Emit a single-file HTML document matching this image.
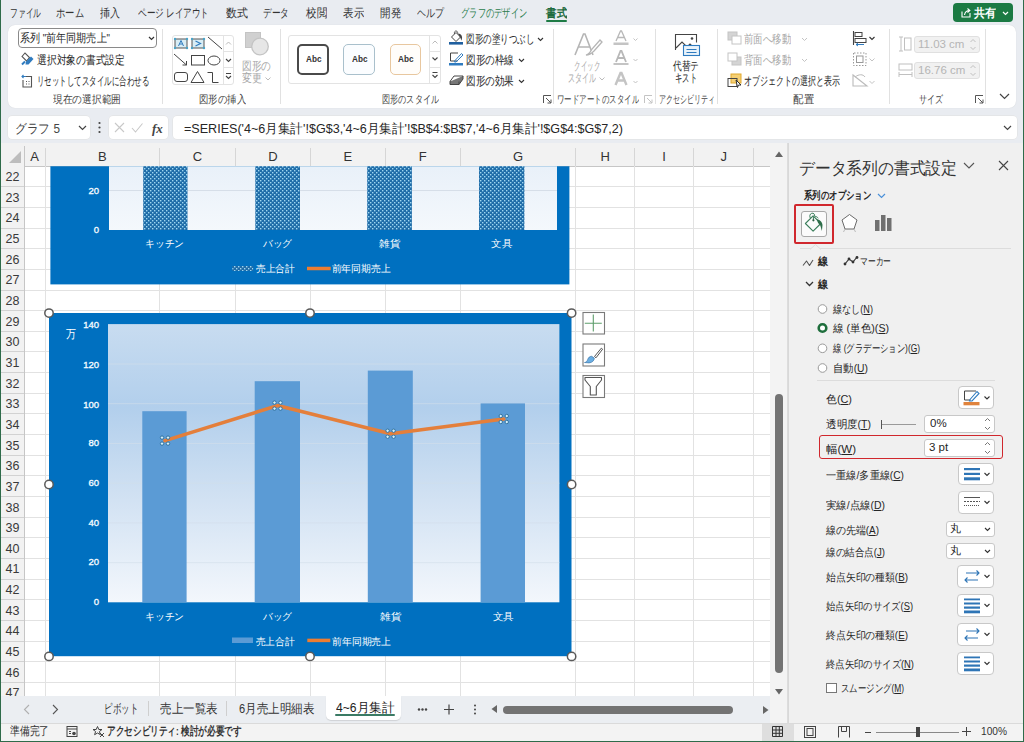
<!DOCTYPE html>
<html><head><meta charset="utf-8">
<style>
*{box-sizing:border-box}
html,body{margin:0;padding:0}
body{width:1024px;height:742px;overflow:hidden;position:relative;background:#e9ecf1;font-family:"Liberation Sans",sans-serif;color:#262626;font-size:12px}
.a{position:absolute}
.t{position:absolute;white-space:nowrap;line-height:1}
/* tabs */
.tab{position:absolute;top:6px;font-size:12px;color:#333;white-space:nowrap;line-height:14px}
.rib{left:8px;top:24.5px;width:1008px;height:83px;background:#fff;border-radius:7px;box-shadow:0 0 1px rgba(0,0,0,.15)}
.sep{position:absolute;top:32px;width:1px;height:70px;background:#e1e1e1}
.glab{position:absolute;top:93px;font-size:11px;color:#444;white-space:nowrap;line-height:12px}
.rt{position:absolute;font-size:11px;color:#262626;white-space:nowrap;line-height:12px}
.dis{color:#a8a8a8}
/* grid */
.colh{position:absolute;top:146px;height:20px;background:#f0f0f0;border-right:1px solid #d4d4d4;border-bottom:1px solid #bdbdbd;font-size:13px;color:#444;text-align:center;line-height:20px}
.rowh{position:absolute;left:1px;width:24px;background:#f0f0f0;border-bottom:1px solid #d4d4d4;border-right:1px solid #bdbdbd;font-size:13px;color:#444;text-align:center}
/* pane */
.pl{position:absolute;font-size:11px;color:#262626;white-space:nowrap;line-height:12px}
.btn{position:absolute;background:#fff;border:1px solid #c8c8c8;border-radius:4px}
</style></head><body>
<!-- window frame -->
<div class="a" style="left:0;top:0;width:1px;height:742px;background:#2f6b4a"></div>
<div class="a" style="right:0;top:0;width:1px;height:742px;background:#2f6b4a"></div>
<div class="a" style="left:0;bottom:0;width:1024px;height:1px;background:#2f6b4a"></div>

<!-- menu tabs -->
<div class="f tab" style="left:10px;width:31px">ファイル</div>
<div class="f tab" style="left:56px;width:28px">ホーム</div>
<div class="f tab" style="left:100px;width:20px">挿入</div>
<div class="f tab" style="left:138px;width:71px">ページ レイアウト</div>
<div class="f tab" style="left:226px;width:22px">数式</div>
<div class="f tab" style="left:263px;width:26px">データ</div>
<div class="f tab" style="left:306px;width:21px">校閲</div>
<div class="f tab" style="left:343px;width:21px">表示</div>
<div class="f tab" style="left:380px;width:21px">開発</div>
<div class="f tab" style="left:417px;width:27px">ヘルプ</div>
<div class="f tab" style="left:461px;width:66px;color:#2a7d4c">グラフのデザイン</div>
<div class="f tab" style="left:546px;width:21px;color:#1e6b3f;font-weight:bold">書式</div>
<div class="a" style="left:546px;top:20px;width:21px;height:2px;background:#1e7b45;border-radius:1px"></div>
<div class="a" style="left:953px;top:3px;width:60px;height:19px;background:#1b7a43;border-radius:4px"></div>
<svg class="a" style="left:960px;top:7px" width="12" height="11" viewBox="0 0 12 11"><path d="M2 4.5v5.5h8V6" fill="none" stroke="#fff" stroke-width="1.1"/><path d="M4.5 8c.5-3 2.5-4.5 5-4.5M7.5 1.5l2.3 2-2.3 2" fill="none" stroke="#fff" stroke-width="1.1"/></svg>
<div class="f t" style="left:974px;top:7px;width:22px;color:#fff;font-size:12px;font-weight:bold">共有</div>
<svg class="a" style="left:1002px;top:11px" width="7" height="5" viewBox="0 0 7 5"><path d="M1 1l2.5 2.5L6 1" fill="none" stroke="#fff" stroke-width="1.2"/></svg>

<!-- ribbon -->
<div class="a rib"></div>
<!-- group 1: current selection -->
<div class="a" style="left:18px;top:28px;width:139px;height:20px;border:1px solid #8a8a8a;border-radius:4px;background:#fff"></div>
<div class="f rt" style="left:20px;top:32px;width:90px;font-size:11.5px">系列 "前年同期売上"</div>
<svg class="a" style="left:148px;top:36px" width="7" height="5" viewBox="0 0 7 5"><path d="M1 1l2.5 2.5L6 1" fill="none" stroke="#333" stroke-width="1.2"/></svg>
<svg class="a" style="left:20px;top:52px" width="14" height="14" viewBox="0 0 14 14"><path d="M2 4.5l3-3.5 4.5 4.5-3 3.5z" fill="none" stroke="#555" stroke-width="1.1"/><path d="M6 9.5l5-5 2.5 2.5-5 5.5H5.5z" fill="#2f7bbf"/><path d="M2 12.5l3-3" stroke="#2f7bbf" stroke-width="2"/></svg>
<div class="f rt" style="left:37px;top:54px;width:88px;font-size:11.5px">選択対象の書式設定</div>
<svg class="a" style="left:21px;top:73px" width="12" height="15" viewBox="0 0 12 15"><path d="M3.5 3.5h7v10.5h-8.5v-7" fill="none" stroke="#555" stroke-width="1.1"/><path d="M1 3.5h4M2.5 2l-1.5 1.5 1.5 1.5" fill="none" stroke="#2f7bbf" stroke-width="1.1"/><path d="M5 8.5h1M7.5 8.5h1M5 11h1M7.5 11h1" stroke="#555" stroke-width="1"/></svg>
<div class="f rt" style="left:37px;top:75px;width:112px;font-size:11.5px">リセットしてスタイルに合わせる</div>
<div class="f glab" style="left:53px;width:68px">現在の選択範囲</div>
<div class="sep" style="left:162px;top:29px;height:75px"></div>

<!-- group 2: insert shapes -->
<div class="a" style="left:172px;top:35px;width:62px;height:50px;border:1px solid #e3e3e3;border-radius:3px"></div>
<div class="a" style="left:223px;top:35px;width:1px;height:50px;background:#e3e3e3"></div>
<div class="a" style="left:223px;top:51px;width:11px;height:1px;background:#e3e3e3"></div>
<div class="a" style="left:223px;top:67px;width:11px;height:1px;background:#e3e3e3"></div>
<svg class="a" style="left:172px;top:35px" width="62" height="50" viewBox="0 0 62 50">
 <rect x="3" y="4" width="12" height="9" fill="#d8edf5" stroke="#555" stroke-width="1"/>
 <path d="M6.5 11l2.5-5.5 2.5 5.5M7.5 9h3" fill="none" stroke="#2f7bbf" stroke-width="1"/>
 <circle cx="3" cy="4" r="1.2" fill="#4aa3c8"/><circle cx="15" cy="4" r="1.2" fill="#4aa3c8"/><circle cx="3" cy="13" r="1.2" fill="#4aa3c8"/><circle cx="15" cy="13" r="1.2" fill="#4aa3c8"/>
 <rect x="20" y="4" width="12" height="9" fill="#d8edf5" stroke="#555" stroke-width="1"/>
 <path d="M23.5 6l5 2.5-5 2.5" fill="none" stroke="#2f7bbf" stroke-width="1.2"/>
 <circle cx="20" cy="4" r="1.2" fill="#4aa3c8"/><circle cx="32" cy="4" r="1.2" fill="#4aa3c8"/><circle cx="20" cy="13" r="1.2" fill="#4aa3c8"/><circle cx="32" cy="13" r="1.2" fill="#4aa3c8"/>
 <path d="M36 2l14 12" stroke="#444" stroke-width="1"/>
 <path d="M2 19l12.5 11M14.5 30v-4M14.5 30h-4" fill="none" stroke="#444" stroke-width="1"/>
 <rect x="19.5" y="20.5" width="13" height="9.5" fill="none" stroke="#444" stroke-width="1"/>
 <ellipse cx="42" cy="25.5" rx="6" ry="4.5" fill="none" stroke="#444" stroke-width="1"/>
 <rect x="2.5" y="37.5" width="13" height="9" rx="2.5" fill="none" stroke="#444" stroke-width="1"/>
 <path d="M19 47.5l6.5-11 6.5 11z" fill="none" stroke="#444" stroke-width="1"/>
 <path d="M35.5 37.5h5v10h6" fill="none" stroke="#444" stroke-width="1"/>
 <path d="M54 9.5l2.5-2.5 2.5 2.5" fill="none" stroke="#bbb" stroke-width="1"/>
 <path d="M54 24l2.5 2.5 2.5-2.5" fill="none" stroke="#444" stroke-width="1.1"/>
 <path d="M54 38.5h5M54 41l2.5 2.5 2.5-2.5" fill="none" stroke="#444" stroke-width="1.1"/>
</svg>
<svg class="a" style="left:244px;top:31px" width="28" height="26" viewBox="0 0 28 26"><rect x="1.5" y="1.5" width="15" height="15" fill="#d0d0d0" stroke="#c4c4c4"/><circle cx="16" cy="15.5" r="8.3" fill="#e6e6e6" stroke="#c4c4c4" stroke-width="1.3"/></svg>
<div class="f rt dis" style="left:242px;top:60px;width:29px;font-size:11.5px">図形の</div>
<div class="f rt dis" style="left:242px;top:72px;width:20px;font-size:11.5px">変更</div>
<svg class="a" style="left:265px;top:77px" width="6" height="4" viewBox="0 0 6 4"><path d="M.5.5l2.5 2.5 2.5-2.5" fill="none" stroke="#bbb" stroke-width="1"/></svg>
<div class="f glab" style="left:199px;width:47px">図形の挿入</div>
<div class="sep" style="left:280px;top:29px;height:75px"></div>

<!-- group 3: shape styles -->
<div class="a" style="left:288px;top:35px;width:153px;height:49px;border:1px solid #e3e3e3;border-radius:3px"></div>
<div class="a" style="left:429px;top:35px;width:1px;height:49px;background:#e3e3e3"></div>
<div class="a" style="left:429px;top:51px;width:12px;height:1px;background:#e3e3e3"></div>
<div class="a" style="left:429px;top:67px;width:12px;height:1px;background:#e3e3e3"></div>
<svg class="a" style="left:429px;top:35px" width="12" height="49" viewBox="0 0 12 49"><path d="M3.5 8.5l2.5-2.5 2.5 2.5" fill="none" stroke="#bbb" stroke-width="1"/><path d="M3.5 22.5l2.5 2.5 2.5-2.5" fill="none" stroke="#444" stroke-width="1.1"/><path d="M3.5 37.5h5M3.5 40l2.5 2.5 2.5-2.5" fill="none" stroke="#444" stroke-width="1.1"/></svg>
<div class="a" style="left:297px;top:44px;width:32px;height:31px;border:2px solid #4a4a4a;border-radius:5px"></div>
<div class="a" style="left:343px;top:44px;width:32px;height:31px;border:1.6px solid #a9c0cc;border-radius:5px;background:#fbfdff"></div>
<div class="a" style="left:390px;top:44px;width:31px;height:31px;border:1.6px solid #e8c79f;border-radius:5px;background:#fffdfa"></div>
<div class="f t" style="left:305.5px;top:54px;width:15.5px;font-size:9.5px;color:#333;font-weight:bold">Abc</div>
<div class="f t" style="left:351.5px;top:54px;width:15.5px;font-size:9.5px;color:#333;font-weight:bold">Abc</div>
<div class="f t" style="left:398px;top:54px;width:15.5px;font-size:9.5px;color:#333;font-weight:bold">Abc</div>
<div class="f glab" style="left:382px;width:57px">図形のスタイル</div>

<svg class="a" style="left:449px;top:30px" width="15" height="15" viewBox="0 0 15 15"><path d="M2.5 7l4.5-4.5 4.5 4.5-4.5 4.5z" fill="#fff" stroke="#444" stroke-width="1" stroke-linejoin="round"/><path d="M5.5 4C5 2 6 .8 7.2 1s1.6 1.2 1.4 2.4" fill="none" stroke="#444" stroke-width=".9"/><path d="M8.8 3.5c2.3 0 4.2 1.6 4.3 4l-.6 3.3-1.3-3.3z" fill="#444"/><rect x="0" y="12" width="14" height="2.6" fill="#1f5f9f"/></svg>
<div class="f rt" style="left:466px;top:33px;width:68px;font-size:11.5px">図形の塗りつぶし</div>
<svg class="a" style="left:537px;top:37px" width="7" height="5" viewBox="0 0 7 5"><path d="M1 1l2.5 2.5L6 1" fill="none" stroke="#333" stroke-width="1.1"/></svg>
<svg class="a" style="left:449px;top:51px" width="15" height="15" viewBox="0 0 15 15"><path d="M9 2H1.5v8h7" fill="none" stroke="#444" stroke-width="1"/><path d="M6 9.5l6.5-7 1.5 1.5-7 7H5.5z" fill="none" stroke="#2f7bbf" stroke-width="1"/><rect x="0" y="12" width="14" height="2.5" fill="#2f7bbf"/></svg>
<div class="f rt" style="left:466px;top:54px;width:48px;font-size:11.5px">図形の枠線</div>
<svg class="a" style="left:518px;top:58px" width="7" height="5" viewBox="0 0 7 5"><path d="M1 1l2.5 2.5L6 1" fill="none" stroke="#333" stroke-width="1.1"/></svg>
<svg class="a" style="left:449px;top:74px" width="15" height="13" viewBox="0 0 15 13"><path d="M1 7.5l4-5.5h9l-4 5.5z" fill="#fff" stroke="#444" stroke-width="1"/><path d="M1 7.5v3h9l4-5.5V2M10 7.5v3" fill="#777" stroke="#444" stroke-width="1"/></svg>
<div class="f rt" style="left:466px;top:75px;width:48px;font-size:11.5px">図形の効果</div>
<svg class="a" style="left:518px;top:79px" width="7" height="5" viewBox="0 0 7 5"><path d="M1 1l2.5 2.5L6 1" fill="none" stroke="#333" stroke-width="1.1"/></svg>
<svg class="a" style="left:543px;top:95px" width="9" height="9" viewBox="0 0 9 9"><path d="M.5 8V.5H8M3 3l5 5M8 4.5V8H4.5" fill="none" stroke="#555" stroke-width="1"/></svg>
<div class="sep" style="left:553px;top:29px;height:75px"></div>

<!-- group 4: wordart -->
<svg class="a" style="left:573px;top:32px" width="30" height="25" viewBox="0 0 30 25"><path d="M2 23L10.5 2h1.5L20 23M5.5 15h11" fill="none" stroke="#b5b5b5" stroke-width="1.6"/><path d="M13 23c3-1 5-4 6-6l8-9 2 2-8 9c-2 2-4 4-8 4z" fill="#fff" stroke="#b5b5b5" stroke-width="1.3"/></svg>
<div class="f rt dis" style="left:574px;top:60px;width:26px;font-size:11.5px">クイック</div>
<div class="f rt dis" style="left:568px;top:72px;width:28px;font-size:11.5px">スタイル</div>
<svg class="a" style="left:599px;top:77px" width="6" height="4" viewBox="0 0 6 4"><path d="M.5.5l2.5 2.5 2.5-2.5" fill="none" stroke="#bbb" stroke-width="1"/></svg>
<svg class="a" style="left:612px;top:30px" width="30" height="58" viewBox="0 0 30 58">
<path d="M4 11L8.5 1h1L14 11M5.8 7.5h6.5" fill="none" stroke="#b8b8b8" stroke-width="1.3"/><rect x="1.5" y="12.5" width="15" height="2.5" fill="#c4c4c4"/>
<path d="M4 32L8.5 21h1L14 32M5.8 28h6.5" fill="none" stroke="#b8b8b8" stroke-width="1.8"/><rect x="1.5" y="33" width="15" height="2" fill="#c4c4c4"/>
<path d="M3.5 55L8.5 43h1l5 12M5.5 50.5h7" fill="none" stroke="#c4c4c4" stroke-width="2.4"/>
<path d="M21.5 8.5l2 2 2-2M21.5 29l2 2 2-2M21.5 51l2 2 2-2" fill="none" stroke="#c4c4c4" stroke-width="1"/>
</svg>
<div class="f glab" style="left:557px;width:82px">ワードアートのスタイル</div>
<svg class="a" style="left:644px;top:95px" width="9" height="9" viewBox="0 0 9 9"><path d="M.5 8V.5H8M3 3l5 5M8 4.5V8H4.5" fill="none" stroke="#c4c4c4" stroke-width="1"/></svg>
<div class="sep" style="left:655px;top:29px;height:75px"></div>

<!-- group 5: accessibility -->
<svg class="a" style="left:674px;top:33px" width="27" height="24" viewBox="0 0 27 24"><path d="M1.5 17V1.5h21v8" fill="none" stroke="#444" stroke-width="1.1"/><path d="M2 15l6-6 5 5 3-3 2 2" fill="none" stroke="#444" stroke-width="1.1"/><circle cx="18" cy="5.5" r="1.3" fill="#444"/><rect x="9.5" y="12.5" width="16" height="10" fill="#e9f3fb" stroke="#2f7bbf" stroke-width="1.1"/><path d="M12.5 16.5h10M12.5 19.5h10" stroke="#2f7bbf" stroke-width="1"/></svg>
<div class="f rt" style="left:673px;top:60px;width:26px;font-size:11.5px">代替テ</div>
<div class="f rt" style="left:675px;top:72px;width:22px;font-size:11.5px">キスト</div>
<div class="f glab" style="left:659px;width:56px">アクセシビリティ</div>
<div class="sep" style="left:717px;top:29px;height:75px"></div>

<!-- group 6: arrange -->
<svg class="a" style="left:727px;top:31px" width="15" height="14" viewBox="0 0 15 14"><rect x="1" y="1" width="9" height="8" fill="#d4d4d4" stroke="#c4c4c4"/><rect x="5" y="5" width="9" height="8" fill="#fff" stroke="#c4c4c4"/></svg>
<div class="f rt dis" style="left:744px;top:33px;width:47px;font-size:11.5px">前面へ移動</div>
<svg class="a" style="left:801px;top:37px" width="7" height="5" viewBox="0 0 7 5"><path d="M1 1l2.5 2.5L6 1" fill="none" stroke="#c4c4c4" stroke-width="1"/></svg>
<svg class="a" style="left:727px;top:52px" width="15" height="14" viewBox="0 0 15 14"><rect x="5" y="5" width="9" height="8" fill="#d4d4d4" stroke="#c4c4c4"/><rect x="1" y="1" width="9" height="8" fill="#fff" stroke="#c4c4c4"/></svg>
<div class="f rt dis" style="left:744px;top:54px;width:47px;font-size:11.5px">背面へ移動</div>
<svg class="a" style="left:801px;top:58px" width="7" height="5" viewBox="0 0 7 5"><path d="M1 1l2.5 2.5L6 1" fill="none" stroke="#c4c4c4" stroke-width="1"/></svg>
<svg class="a" style="left:727px;top:73px" width="16" height="15" viewBox="0 0 16 15"><rect x="4" y="1" width="10" height="9" fill="#f5cf73" stroke="#e0a82e"/><rect x="1" y="5.5" width="9" height="8" fill="none" stroke="#444"/><path d="M9 7l5 5h-2.5l-1 2.5z" fill="#fff" stroke="#333" stroke-width="1"/></svg>
<div class="f rt" style="left:744px;top:75px;width:96px;font-size:11.5px">オブジェクトの選択と表示</div>
<svg class="a" style="left:852px;top:30px" width="24" height="58" viewBox="0 0 24 58">
<path d="M1.5 1v14" stroke="#444" stroke-width="1.1"/><rect x="3" y="2.5" width="7" height="4" fill="none" stroke="#444"/><rect x="3" y="8.5" width="11" height="4" fill="none" stroke="#444"/><path d="M4 14.5h8M6 13l-2 1.5 2 1.5" fill="none" stroke="#2f7bbf" stroke-width="1"/>
<path d="M17.5 7l2.5 2.5 2.5-2.5" fill="none" stroke="#333" stroke-width="1.1"/>
<path d="M1.5 23v12.5h12.5V23z" fill="none" stroke="#999" stroke-width="1" stroke-dasharray="1.5 1.5"/><rect x="4.5" y="26" width="6.5" height="6.5" fill="none" stroke="#999"/>
<path d="M17.5 28.5l2.5 2.5 2.5-2.5" fill="none" stroke="#c4c4c4" stroke-width="1"/>
<path d="M1 56h14l-14-11z" fill="none" stroke="#bbb" stroke-width="1.1"/><path d="M3 47c4-3 8-3 10 0" fill="none" stroke="#bbb"/>
<path d="M17.5 51l2.5 2.5 2.5-2.5" fill="none" stroke="#c4c4c4" stroke-width="1"/>
</svg>
<div class="f glab" style="left:793px;width:21px">配置</div>
<div class="sep" style="left:889px;top:29px;height:75px"></div>

<!-- group 7: size -->
<svg class="a" style="left:898px;top:36px" width="14" height="16" viewBox="0 0 14 16"><path d="M1 1h4M1 15h4M3 1v14" stroke="#c0c0c0" stroke-width="1"/><rect x="6.5" y="2" width="6.5" height="12" fill="none" stroke="#c0c0c0"/></svg>
<div class="a" style="left:914px;top:36px;width:66px;height:17px;background:#f1f1f1;border:1px solid #e0e0e0;border-radius:3px"></div>
<div class="t" style="left:918px;top:39px;font-size:11.5px;color:#b5b5b5">11.03 cm</div>
<svg class="a" style="left:970px;top:38px" width="6" height="13" viewBox="0 0 6 13"><path d="M.5 4l2.5-2.5 2.5 2.5M.5 9l2.5 2.5 2.5-2.5" fill="none" stroke="#c0c0c0" stroke-width="1"/></svg>
<svg class="a" style="left:898px;top:63px" width="15" height="15" viewBox="0 0 15 15"><rect x="1" y="1" width="13" height="6" fill="none" stroke="#c0c0c0"/><path d="M1 9v5M14 9v5M1 11.5h13" stroke="#c0c0c0" stroke-width="1"/></svg>
<div class="a" style="left:914px;top:62px;width:66px;height:17px;background:#f1f1f1;border:1px solid #e0e0e0;border-radius:3px"></div>
<div class="t" style="left:918px;top:65px;font-size:11.5px;color:#b5b5b5">16.76 cm</div>
<svg class="a" style="left:970px;top:64px" width="6" height="13" viewBox="0 0 6 13"><path d="M.5 4l2.5-2.5 2.5 2.5M.5 9l2.5 2.5 2.5-2.5" fill="none" stroke="#c0c0c0" stroke-width="1"/></svg>
<div class="f glab" style="left:919px;width:24px">サイズ</div>
<svg class="a" style="left:975px;top:95px" width="9" height="9" viewBox="0 0 9 9"><path d="M.5 8V.5H8M3 3l5 5M8 4.5V8H4.5" fill="none" stroke="#555" stroke-width="1"/></svg>
<div class="sep" style="left:985px;top:29px;height:75px"></div>
<svg class="a" style="left:999px;top:93px" width="11" height="7" viewBox="0 0 11 7"><path d="M1 1l4.5 4.5L10 1" fill="none" stroke="#444" stroke-width="1.2"/></svg>

<!-- formula bar -->
<div class="a" style="left:8px;top:116px;width:82px;height:23px;background:#fff;border-radius:4px;box-shadow:0 0 0 .5px #e0e0e0"></div>
<div class="f t" style="left:15px;top:122px;width:45px;font-size:13px;color:#444">グラフ 5</div>
<svg class="a" style="left:78px;top:125px" width="9" height="6" viewBox="0 0 9 6"><path d="M1 1l3.5 3.5L8 1" fill="none" stroke="#444" stroke-width="1.2"/></svg>
<svg class="a" style="left:98px;top:121px" width="3" height="13" viewBox="0 0 3 13"><circle cx="1.5" cy="2" r="1.1" fill="#444"/><circle cx="1.5" cy="6.5" r="1.1" fill="#444"/><circle cx="1.5" cy="11" r="1.1" fill="#444"/></svg>
<div class="a" style="left:109px;top:116px;width:59px;height:23px;background:#fff;border-radius:4px;box-shadow:0 0 0 .5px #e0e0e0"></div>
<svg class="a" style="left:113px;top:120px" width="52" height="16" viewBox="0 0 52 16"><path d="M2 3l9 9M11 3l-9 9" stroke="#c8c8c8" stroke-width="1.1"/><path d="M19 8l3.5 4 7-8.5" fill="none" stroke="#c8c8c8" stroke-width="1.1"/><text x="39" y="12.5" font-family="Liberation Serif" font-style="italic" font-weight="bold" font-size="13" fill="#444">fx</text></svg>
<div class="a" style="left:173px;top:116px;width:844px;height:23px;background:#fff;border-radius:4px;box-shadow:0 0 0 .5px #e0e0e0"></div>
<div class="f t" style="left:184px;top:122px;width:439px;font-size:13px;color:#262626">=SERIES('4~6月集計'!$G$3,'4~6月集計'!$B$4:$B$7,'4~6月集計'!$G$4:$G$7,2)</div>
<svg class="a" style="left:1003px;top:125px" width="9" height="6" viewBox="0 0 9 6"><path d="M1 1l3.5 3.5L8 1" fill="none" stroke="#444" stroke-width="1.2"/></svg>

<!-- grid area -->
<div class="a" style="left:1px;top:143px;width:770px;height:553px;background:#fff"></div>
<div class="a" style="left:1px;top:143px;width:770px;height:23px;background:#f2f2f2"></div>
<div class="a" style="left:1px;top:165.8px;width:770px;height:1px;background:#c6c6c6"></div>
<div class="a" style="left:23.80px;top:148px;width:1px;height:18px;background:#d6d6d6"></div>
<div class="a" style="left:23.80px;top:166px;width:1px;height:530px;background:#c6c6c6"></div>
<div class="t" style="left:24.3px;top:150px;width:20.7px;text-align:center;font-size:13px;color:#333">A</div>
<div class="a" style="left:44.50px;top:148px;width:1px;height:18px;background:#d6d6d6"></div>
<div class="a" style="left:44.50px;top:166px;width:1px;height:530px;background:#e2e2e2"></div>
<div class="t" style="left:45px;top:150px;width:114.5px;text-align:center;font-size:13px;color:#333">B</div>
<div class="a" style="left:159.00px;top:148px;width:1px;height:18px;background:#d6d6d6"></div>
<div class="a" style="left:159.00px;top:166px;width:1px;height:530px;background:#e2e2e2"></div>
<div class="t" style="left:159.5px;top:150px;width:75.9px;text-align:center;font-size:13px;color:#333">C</div>
<div class="a" style="left:234.90px;top:148px;width:1px;height:18px;background:#d6d6d6"></div>
<div class="a" style="left:234.90px;top:166px;width:1px;height:530px;background:#e2e2e2"></div>
<div class="t" style="left:235.4px;top:150px;width:74.99999999999997px;text-align:center;font-size:13px;color:#333">D</div>
<div class="a" style="left:309.90px;top:148px;width:1px;height:18px;background:#d6d6d6"></div>
<div class="a" style="left:309.90px;top:166px;width:1px;height:530px;background:#e2e2e2"></div>
<div class="t" style="left:310.4px;top:150px;width:74.70000000000005px;text-align:center;font-size:13px;color:#333">E</div>
<div class="a" style="left:384.60px;top:148px;width:1px;height:18px;background:#d6d6d6"></div>
<div class="a" style="left:384.60px;top:166px;width:1px;height:530px;background:#e2e2e2"></div>
<div class="t" style="left:385.1px;top:150px;width:75.39999999999998px;text-align:center;font-size:13px;color:#333">F</div>
<div class="a" style="left:460.00px;top:148px;width:1px;height:18px;background:#d6d6d6"></div>
<div class="a" style="left:460.00px;top:166px;width:1px;height:530px;background:#e2e2e2"></div>
<div class="t" style="left:460.5px;top:150px;width:115.29999999999995px;text-align:center;font-size:13px;color:#333">G</div>
<div class="a" style="left:575.30px;top:148px;width:1px;height:18px;background:#d6d6d6"></div>
<div class="a" style="left:575.30px;top:166px;width:1px;height:530px;background:#e2e2e2"></div>
<div class="t" style="left:575.8px;top:150px;width:58.60000000000002px;text-align:center;font-size:13px;color:#333">H</div>
<div class="a" style="left:633.90px;top:148px;width:1px;height:18px;background:#d6d6d6"></div>
<div class="a" style="left:633.90px;top:166px;width:1px;height:530px;background:#e2e2e2"></div>
<div class="t" style="left:634.4px;top:150px;width:59.35000000000002px;text-align:center;font-size:13px;color:#333">I</div>
<div class="a" style="left:693.25px;top:148px;width:1px;height:18px;background:#d6d6d6"></div>
<div class="a" style="left:693.25px;top:166px;width:1px;height:530px;background:#e2e2e2"></div>
<div class="t" style="left:693.75px;top:150px;width:59.75px;text-align:center;font-size:13px;color:#333">J</div>
<div class="a" style="left:753.00px;top:148px;width:1px;height:18px;background:#d6d6d6"></div>
<div class="a" style="left:753.00px;top:166px;width:1px;height:530px;background:#e2e2e2"></div>
<div class="a" style="left:769.50px;top:148px;width:1px;height:18px;background:#d6d6d6"></div>
<div class="a" style="left:769.50px;top:166px;width:1px;height:530px;background:#e2e2e2"></div>
<svg class="a" style="left:8px;top:150px" width="14" height="14" viewBox="0 0 14 14"><path d="M13 1v12H1z" fill="#bdbdbd"/></svg>
<div class="a" style="left:1px;top:166px;width:23.5px;height:530px;background:#f2f2f2"></div>
<div class="t" style="left:1px;top:171.10px;width:23px;text-align:center;font-size:12.5px;color:#3a3a3a">22</div>
<div class="a" style="left:1px;top:186.25px;width:23.5px;height:1px;background:#d2d2d2"></div>
<div class="a" style="left:24.5px;top:186.25px;width:746px;height:1px;background:#e2e2e2"></div>
<div class="t" style="left:1px;top:191.75px;width:23px;text-align:center;font-size:12.5px;color:#3a3a3a">23</div>
<div class="a" style="left:1px;top:206.90px;width:23.5px;height:1px;background:#d2d2d2"></div>
<div class="a" style="left:24.5px;top:206.90px;width:746px;height:1px;background:#e2e2e2"></div>
<div class="t" style="left:1px;top:212.40px;width:23px;text-align:center;font-size:12.5px;color:#3a3a3a">24</div>
<div class="a" style="left:1px;top:227.55px;width:23.5px;height:1px;background:#d2d2d2"></div>
<div class="a" style="left:24.5px;top:227.55px;width:746px;height:1px;background:#e2e2e2"></div>
<div class="t" style="left:1px;top:233.05px;width:23px;text-align:center;font-size:12.5px;color:#3a3a3a">25</div>
<div class="a" style="left:1px;top:248.20px;width:23.5px;height:1px;background:#d2d2d2"></div>
<div class="a" style="left:24.5px;top:248.20px;width:746px;height:1px;background:#e2e2e2"></div>
<div class="t" style="left:1px;top:253.70px;width:23px;text-align:center;font-size:12.5px;color:#3a3a3a">26</div>
<div class="a" style="left:1px;top:268.85px;width:23.5px;height:1px;background:#d2d2d2"></div>
<div class="a" style="left:24.5px;top:268.85px;width:746px;height:1px;background:#e2e2e2"></div>
<div class="t" style="left:1px;top:274.35px;width:23px;text-align:center;font-size:12.5px;color:#3a3a3a">27</div>
<div class="a" style="left:1px;top:289.50px;width:23.5px;height:1px;background:#d2d2d2"></div>
<div class="a" style="left:24.5px;top:289.50px;width:746px;height:1px;background:#e2e2e2"></div>
<div class="t" style="left:1px;top:295.00px;width:23px;text-align:center;font-size:12.5px;color:#3a3a3a">28</div>
<div class="a" style="left:1px;top:310.15px;width:23.5px;height:1px;background:#d2d2d2"></div>
<div class="a" style="left:24.5px;top:310.15px;width:746px;height:1px;background:#e2e2e2"></div>
<div class="t" style="left:1px;top:315.65px;width:23px;text-align:center;font-size:12.5px;color:#3a3a3a">29</div>
<div class="a" style="left:1px;top:330.80px;width:23.5px;height:1px;background:#d2d2d2"></div>
<div class="a" style="left:24.5px;top:330.80px;width:746px;height:1px;background:#e2e2e2"></div>
<div class="t" style="left:1px;top:336.30px;width:23px;text-align:center;font-size:12.5px;color:#3a3a3a">30</div>
<div class="a" style="left:1px;top:351.45px;width:23.5px;height:1px;background:#d2d2d2"></div>
<div class="a" style="left:24.5px;top:351.45px;width:746px;height:1px;background:#e2e2e2"></div>
<div class="t" style="left:1px;top:356.95px;width:23px;text-align:center;font-size:12.5px;color:#3a3a3a">31</div>
<div class="a" style="left:1px;top:372.10px;width:23.5px;height:1px;background:#d2d2d2"></div>
<div class="a" style="left:24.5px;top:372.10px;width:746px;height:1px;background:#e2e2e2"></div>
<div class="t" style="left:1px;top:377.60px;width:23px;text-align:center;font-size:12.5px;color:#3a3a3a">32</div>
<div class="a" style="left:1px;top:392.75px;width:23.5px;height:1px;background:#d2d2d2"></div>
<div class="a" style="left:24.5px;top:392.75px;width:746px;height:1px;background:#e2e2e2"></div>
<div class="t" style="left:1px;top:398.25px;width:23px;text-align:center;font-size:12.5px;color:#3a3a3a">33</div>
<div class="a" style="left:1px;top:413.40px;width:23.5px;height:1px;background:#d2d2d2"></div>
<div class="a" style="left:24.5px;top:413.40px;width:746px;height:1px;background:#e2e2e2"></div>
<div class="t" style="left:1px;top:418.90px;width:23px;text-align:center;font-size:12.5px;color:#3a3a3a">34</div>
<div class="a" style="left:1px;top:434.05px;width:23.5px;height:1px;background:#d2d2d2"></div>
<div class="a" style="left:24.5px;top:434.05px;width:746px;height:1px;background:#e2e2e2"></div>
<div class="t" style="left:1px;top:439.55px;width:23px;text-align:center;font-size:12.5px;color:#3a3a3a">35</div>
<div class="a" style="left:1px;top:454.70px;width:23.5px;height:1px;background:#d2d2d2"></div>
<div class="a" style="left:24.5px;top:454.70px;width:746px;height:1px;background:#e2e2e2"></div>
<div class="t" style="left:1px;top:460.20px;width:23px;text-align:center;font-size:12.5px;color:#3a3a3a">36</div>
<div class="a" style="left:1px;top:475.35px;width:23.5px;height:1px;background:#d2d2d2"></div>
<div class="a" style="left:24.5px;top:475.35px;width:746px;height:1px;background:#e2e2e2"></div>
<div class="t" style="left:1px;top:480.85px;width:23px;text-align:center;font-size:12.5px;color:#3a3a3a">37</div>
<div class="a" style="left:1px;top:496.00px;width:23.5px;height:1px;background:#d2d2d2"></div>
<div class="a" style="left:24.5px;top:496.00px;width:746px;height:1px;background:#e2e2e2"></div>
<div class="t" style="left:1px;top:501.50px;width:23px;text-align:center;font-size:12.5px;color:#3a3a3a">38</div>
<div class="a" style="left:1px;top:516.65px;width:23.5px;height:1px;background:#d2d2d2"></div>
<div class="a" style="left:24.5px;top:516.65px;width:746px;height:1px;background:#e2e2e2"></div>
<div class="t" style="left:1px;top:522.15px;width:23px;text-align:center;font-size:12.5px;color:#3a3a3a">39</div>
<div class="a" style="left:1px;top:537.30px;width:23.5px;height:1px;background:#d2d2d2"></div>
<div class="a" style="left:24.5px;top:537.30px;width:746px;height:1px;background:#e2e2e2"></div>
<div class="t" style="left:1px;top:542.80px;width:23px;text-align:center;font-size:12.5px;color:#3a3a3a">40</div>
<div class="a" style="left:1px;top:557.95px;width:23.5px;height:1px;background:#d2d2d2"></div>
<div class="a" style="left:24.5px;top:557.95px;width:746px;height:1px;background:#e2e2e2"></div>
<div class="t" style="left:1px;top:563.45px;width:23px;text-align:center;font-size:12.5px;color:#3a3a3a">41</div>
<div class="a" style="left:1px;top:578.60px;width:23.5px;height:1px;background:#d2d2d2"></div>
<div class="a" style="left:24.5px;top:578.60px;width:746px;height:1px;background:#e2e2e2"></div>
<div class="t" style="left:1px;top:584.10px;width:23px;text-align:center;font-size:12.5px;color:#3a3a3a">42</div>
<div class="a" style="left:1px;top:599.25px;width:23.5px;height:1px;background:#d2d2d2"></div>
<div class="a" style="left:24.5px;top:599.25px;width:746px;height:1px;background:#e2e2e2"></div>
<div class="t" style="left:1px;top:604.75px;width:23px;text-align:center;font-size:12.5px;color:#3a3a3a">43</div>
<div class="a" style="left:1px;top:619.90px;width:23.5px;height:1px;background:#d2d2d2"></div>
<div class="a" style="left:24.5px;top:619.90px;width:746px;height:1px;background:#e2e2e2"></div>
<div class="t" style="left:1px;top:625.40px;width:23px;text-align:center;font-size:12.5px;color:#3a3a3a">44</div>
<div class="a" style="left:1px;top:640.55px;width:23.5px;height:1px;background:#d2d2d2"></div>
<div class="a" style="left:24.5px;top:640.55px;width:746px;height:1px;background:#e2e2e2"></div>
<div class="t" style="left:1px;top:646.05px;width:23px;text-align:center;font-size:12.5px;color:#3a3a3a">45</div>
<div class="a" style="left:1px;top:661.20px;width:23.5px;height:1px;background:#d2d2d2"></div>
<div class="a" style="left:24.5px;top:661.20px;width:746px;height:1px;background:#e2e2e2"></div>
<div class="t" style="left:1px;top:666.70px;width:23px;text-align:center;font-size:12.5px;color:#3a3a3a">46</div>
<div class="a" style="left:1px;top:681.85px;width:23.5px;height:1px;background:#d2d2d2"></div>
<div class="a" style="left:24.5px;top:681.85px;width:746px;height:1px;background:#e2e2e2"></div>
<div class="t" style="left:1px;top:687.35px;width:23px;text-align:center;font-size:12.5px;color:#3a3a3a">47</div>
<div class="a" style="left:24px;top:146px;width:1px;height:550px;background:#c6c6c6"></div>
<div class="a" style="left:770px;top:143px;width:18px;height:580px;background:#f3f3f3;border-right:1px solid #dcdcdc"></div>
<svg class="a" style="left:774px;top:149.5px" width="10" height="8" viewBox="0 0 10 8"><path d="M1 7L5 1.5 9 7z" fill="#666"/></svg>
<div class="a" style="left:775.3px;top:394.3px;width:7.6px;height:279px;background:#737373;border-radius:4px"></div>
<svg class="a" style="left:774px;top:688px" width="10" height="8" viewBox="0 0 10 8"><path d="M1 1L5 6.5 9 1z" fill="#666"/></svg>
<!-- sheet tabs -->
<div class="a" style="left:1px;top:696.4px;width:769px;height:26.2px;background:#ebeef2"></div>
<svg class="a" style="left:22px;top:704px" width="40" height="11" viewBox="0 0 40 11"><path d="M7 1L2.5 5.5 7 10" fill="none" stroke="#b0b0b0" stroke-width="1.1"/><path d="M31 1l4.5 4.5L31 10" fill="none" stroke="#555" stroke-width="1.1"/></svg>
<div class="f t" style="left:104px;top:703px;width:34px;font-size:12.5px;color:#333">ピボット</div>
<div class="a" style="left:148px;top:701px;width:1px;height:15px;background:#cfcfcf"></div>
<div class="f t" style="left:159.5px;top:703px;width:57.5px;font-size:12.5px;color:#333">売上一覧表</div>
<div class="a" style="left:226px;top:701px;width:1px;height:15px;background:#cfcfcf"></div>
<div class="f t" style="left:238.7px;top:703px;width:75px;font-size:12.5px;color:#333">6月売上明細表</div>
<div class="a" style="left:326px;top:696.4px;width:75px;height:23.6px;background:#fff;border-radius:0 0 5px 5px;box-shadow:0 1px 1px rgba(0,0,0,.12)"></div>
<div class="f t" style="left:335.8px;top:702px;width:58.4px;font-size:12.5px;color:#222">4~6月集計</div>
<div class="a" style="left:335px;top:714.3px;width:60px;height:2.2px;background:#3a7a64;border-radius:1px"></div>
<svg class="a" style="left:416px;top:703px" width="66" height="14" viewBox="0 0 66 14"><circle cx="3" cy="6.5" r="1.2" fill="#444"/><circle cx="6.5" cy="6.5" r="1.2" fill="#444"/><circle cx="10" cy="6.5" r="1.2" fill="#444"/><path d="M33 1.5v10M28 6.5h10" stroke="#444" stroke-width="1.2"/><circle cx="59" cy="2.5" r="1" fill="#444"/><circle cx="59" cy="6.5" r="1" fill="#444"/><circle cx="59" cy="10.5" r="1" fill="#444"/></svg>
<svg class="a" style="left:490px;top:704px" width="8" height="10" viewBox="0 0 8 10"><path d="M7 1L1.5 5 7 9z" fill="#666"/></svg>
<div class="a" style="left:503px;top:706px;width:229.5px;height:7.5px;background:#737373;border-radius:4px"></div>
<svg class="a" style="left:762px;top:705px" width="8" height="10" viewBox="0 0 8 10"><path d="M1 1L6.5 5 1 9z" fill="#666"/></svg>

<!-- status bar -->
<div class="a" style="left:1px;top:722.6px;width:1022px;height:18.4px;background:#f3f3f3;border-top:1px solid #dadada"></div>
<div class="f t" style="left:10.2px;top:726px;width:39.3px;font-size:11.5px;color:#333">準備完了</div>
<svg class="a" style="left:66px;top:725px" width="12" height="13" viewBox="0 0 12 13"><rect x="1" y="1.5" width="10" height="10" fill="none" stroke="#444" stroke-width="1"/><path d="M1 4h10M3 6.5h2M3 8.5h2" stroke="#444" stroke-width="1"/><circle cx="8" cy="8.5" r="1.8" fill="#444"/></svg>
<svg class="a" style="left:92px;top:725px" width="13" height="13" viewBox="0 0 13 13"><path d="M5.5 1.5l1.3 3h3.2l-2.6 2 1 3.2L5.5 8 2.6 9.7l1-3.2L1 4.5h3.2z" fill="none" stroke="#444" stroke-width="1"/><path d="M8 8l4 4M12 8l-4 4" stroke="#444" stroke-width="1"/></svg>
<div class="f t" style="left:106.7px;top:726px;width:134.5px;font-size:11.5px;color:#333;font-weight:bold">アクセシビリティ: 検討が必要です</div>
<div class="a" style="left:762px;top:723.5px;width:31.7px;height:17.5px;background:#dedede"></div>
<svg class="a" style="left:772px;top:726px" width="11" height="11" viewBox="0 0 11 11"><path d="M.5.5h10v10H.5zM.5 4h10M.5 7.3h10M4 .5v10M7.3.5v10" fill="none" stroke="#333" stroke-width="1"/></svg>
<svg class="a" style="left:804px;top:726px" width="12" height="12" viewBox="0 0 12 12"><rect x=".5" y=".5" width="11" height="11" fill="none" stroke="#444"/><rect x="3" y="2.5" width="6" height="7" fill="none" stroke="#444"/></svg>
<svg class="a" style="left:838px;top:726px" width="12" height="12" viewBox="0 0 12 12"><path d="M.5 11.5V.5h11v11M3.5.5v5h5v-5" fill="none" stroke="#444"/></svg>
<div class="a" style="left:865px;top:731.5px;width:6px;height:1px;background:#444"></div>
<div class="a" style="left:876px;top:731.5px;width:83px;height:1px;background:#888"></div>
<div class="a" style="left:915.6px;top:727px;width:4px;height:10px;background:#444"></div>
<svg class="a" style="left:962px;top:727px" width="9" height="9" viewBox="0 0 9 9"><path d="M4.5 0v9M0 4.5h9" stroke="#444" stroke-width="1"/></svg>
<div class="f t" style="left:981px;top:726px;width:26px;font-size:11.5px;color:#333">100%</div>
<!-- charts -->
<svg class="a" style="left:0;top:0" width="1024" height="742" viewBox="0 0 1024 742" font-family="Liberation Sans, sans-serif">
<defs>
 <pattern id="dots" width="4" height="4" patternUnits="userSpaceOnUse">
  <rect width="4" height="4" fill="#1f6ca8"/>
  <rect x="0" y="0" width="1.4" height="1.4" fill="#9fd6f0"/>
  <rect x="2" y="2" width="1.4" height="1.4" fill="#9fd6f0"/>
 </pattern>
 <linearGradient id="pg1" x1="0" y1="0" x2="0" y2="1">
  <stop offset="0" stop-color="#dde9f6"/><stop offset="1" stop-color="#f4f8fc"/>
 </linearGradient>
 <linearGradient id="pg2" x1="0" y1="0" x2="0" y2="1">
  <stop offset="0" stop-color="#c8dcf0"/>
  <stop offset="0.3" stop-color="#b2cfec"/>
  <stop offset="0.6" stop-color="#cfe0f2"/>
  <stop offset="1" stop-color="#f3f7fc"/>
 </linearGradient>
 <g id="mk" fill="#d5f0fb" stroke="#2b6d99" stroke-width="0.9"><circle cx="-3" cy="-3" r="1.7"/><circle cx="3" cy="-3" r="1.7"/><circle cx="-3" cy="3" r="1.7"/><circle cx="3" cy="3" r="1.7"/></g>
 <clipPath id="c1"><rect x="0" y="166.3" width="770" height="530"/></clipPath>
</defs>
<g clip-path="url(#c1)">
 <rect x="50.4" y="100" width="519" height="184.4" fill="#0070c0"/>
 <rect x="109" y="100" width="448" height="130" fill="url(#pg1)"/>
 <path d="M109 190.5h448" stroke="#d6dee8" stroke-width="1"/>
 <rect x="143.2" y="100" width="44.3" height="130" fill="url(#dots)"/>
 <rect x="255.3" y="100" width="44.7" height="130" fill="url(#dots)"/>
 <rect x="367.2" y="100" width="44.7" height="130" fill="url(#dots)"/>
 <rect x="479" y="100" width="45.4" height="130" fill="url(#dots)"/>
 <g fill="#f4faff" stroke="#f4faff" stroke-width="0.35" font-size="9.5" text-anchor="end"><text x="99" y="193.5">20</text><text x="99" y="233">0</text></g>
 <g fill="#fff" font-size="9.5">
  <text x="145" y="247" textLength="39" lengthAdjust="spacingAndGlyphs">キッチン</text>
  <text x="263" y="247" textLength="29" lengthAdjust="spacingAndGlyphs">バッグ</text>
  <text x="379" y="247" textLength="21" lengthAdjust="spacingAndGlyphs">雑貨</text>
  <text x="491" y="247" textLength="21" lengthAdjust="spacingAndGlyphs">文具</text>
 </g>
 <rect x="232.3" y="266" width="21" height="5" fill="url(#dots)"/>
 <text x="256" y="272" fill="#fff" font-size="10" textLength="38.7" lengthAdjust="spacingAndGlyphs">売上合計</text>
 <path d="M307 268.5h23.7" stroke="#ed7d31" stroke-width="3.5"/>
 <text x="331.6" y="272" fill="#fff" font-size="10" textLength="59" lengthAdjust="spacingAndGlyphs">前年同期売上</text>
</g>

<!-- chart 2 -->
<rect x="49" y="313" width="522.5" height="343.2" fill="#0070c0"/>
<rect x="108" y="324.1" width="451.4" height="278.2" fill="url(#pg2)"/>
<g stroke="#d3dfeb" stroke-width="1" opacity="0.6">
 <path d="M108 364h451.4M108 403.7h451.4M108 443.5h451.4M108 483.2h451.4M108 522.9h451.4M108 562.6h451.4"/>
</g>
<g fill="#5b9bd5">
 <rect x="142.3" y="411.2" width="44.3" height="191.1"/>
 <rect x="254.7" y="381.2" width="45.3" height="221.1"/>
 <rect x="367.8" y="370.6" width="45" height="231.7"/>
 <rect x="480.6" y="403.4" width="44.4" height="198.9"/>
</g>
<g fill="#f4faff" stroke="#f4faff" stroke-width="0.35" font-size="9.5" text-anchor="end">
 <text x="99" y="328.3">140</text><text x="99" y="368">120</text><text x="99" y="407.7">100</text>
 <text x="99" y="445.8">80</text><text x="99" y="485.5">60</text><text x="99" y="525.5">40</text>
 <text x="99" y="565.2">20</text><text x="99" y="604.8">0</text>
</g>
<text x="66.4" y="338" fill="#fff" font-size="12" textLength="10" lengthAdjust="spacingAndGlyphs">万</text>
<g fill="#fff" font-size="9.5">
 <text x="145" y="620" textLength="39.2" lengthAdjust="spacingAndGlyphs">キッチン</text>
 <text x="263" y="620" textLength="29" lengthAdjust="spacingAndGlyphs">バッグ</text>
 <text x="380" y="620" textLength="21" lengthAdjust="spacingAndGlyphs">雑貨</text>
 <text x="492.5" y="620" textLength="21" lengthAdjust="spacingAndGlyphs">文具</text>
</g>
<rect x="232" y="637.5" width="21" height="5.5" fill="#5b9bd5"/>
<text x="255.5" y="644.5" fill="#fff" font-size="10" textLength="39" lengthAdjust="spacingAndGlyphs">売上合計</text>
<path d="M307.3 640.4h23" stroke="#ed7d31" stroke-width="3.5"/>
<text x="332" y="644.5" fill="#fff" font-size="10" textLength="59" lengthAdjust="spacingAndGlyphs">前年同期売上</text>
<path d="M165 440.6L277.5 405.6L390.6 433.75L503.75 419" fill="none" stroke="#e47f3b" stroke-width="3.6" stroke-linejoin="round" stroke-linecap="round"/>
<use href="#mk" x="165" y="440.6"/><use href="#mk" x="277.5" y="405.6"/><use href="#mk" x="390.6" y="433.75"/><use href="#mk" x="503.75" y="419"/>
<g fill="#fff" stroke="#5a5a5a" stroke-width="1.5">
 <circle cx="49" cy="313.1" r="4.2"/><circle cx="310" cy="313.1" r="4.2"/><circle cx="571.6" cy="313.1" r="4.2"/>
 <circle cx="49" cy="484.5" r="4.2"/><circle cx="571.6" cy="484.5" r="4.2"/>
 <circle cx="49" cy="656.4" r="4.2"/><circle cx="310" cy="656.4" r="4.2"/><circle cx="571.6" cy="656.4" r="4.2"/>
</g>
<!-- side buttons -->
<g fill="#fff" stroke="#7a7a7a" stroke-width="1.1">
 <rect x="583" y="312.5" width="21.5" height="21.5"/><rect x="583" y="344" width="21.5" height="22"/><rect x="583" y="375.5" width="21.5" height="22"/>
</g>
<path d="M593.3 314.5v17M584.8 323.2h17" stroke="#5e9e6c" stroke-width="1.1"/>
<path d="M594.5 356.5l6.8-8.3 1.3 1-6.6 8.6z" fill="#fff" stroke="#555" stroke-width="1"/><path d="M584.5 362.5c1.8-.2 2.6-1.2 3.2-3 .7-2 2-3.2 4-3.2l2.6 1.8c0 2.4-2 4.6-5.3 4.8z" fill="#6aaee3" stroke="#3c76a8" stroke-width=".7"/>
<path d="M585 377.5h16.5v2.5l-5.2 6.5v8.5h-6v-8.5l-5.3-6.5z" fill="#fff" stroke="#555" stroke-width="1.1" stroke-linejoin="round"/>
</svg>
<!-- format pane -->
<div class="a" style="left:788px;top:143px;width:235px;height:579.6px;background:#f0f0f0;border-left:1px solid #d8d8d8"></div>
<div class="f t" style="left:799px;top:160px;width:158px;font-size:17px;color:#333">データ系列の書式設定</div>
<svg class="a" style="left:963px;top:162px" width="12" height="8" viewBox="0 0 12 8"><path d="M1 1l5 5 5-5" fill="none" stroke="#555" stroke-width="1.1"/></svg>
<svg class="a" style="left:998px;top:160px" width="11" height="11" viewBox="0 0 11 11"><path d="M1 1l9 9M10 1l-9 9" stroke="#444" stroke-width="1.1"/></svg>
<div class="f t" style="left:804px;top:190px;width:67px;font-size:11px;color:#262626;font-weight:bold">系列のオプション</div>
<svg class="a" style="left:877px;top:193px" width="9" height="6" viewBox="0 0 9 6"><path d="M1 1l3.5 3.5L8 1" fill="none" stroke="#4a90d9" stroke-width="1.2"/></svg>
<div class="a" style="left:794px;top:204px;width:40px;height:39.5px;border:2px solid #d0272d;border-radius:2px"></div>
<div class="a" style="left:801px;top:210.7px;width:26.2px;height:26.3px;background:#fbfbfb;border:1px solid #a8a8a8;border-radius:3px"></div>
<svg class="a" style="left:801px;top:211px" width="26" height="26" viewBox="0 0 26 26"><path d="M4.4 12.5L12.1 4.8 19.8 12.5 12.1 20.2z" stroke="#3a7d5a" fill="none" stroke-width="1.1" stroke-linejoin="round"/><path d="M9.5 7.5c-1.2-2.2-.8-4.6 1.2-5.2 1.8-.5 3.2.8 3 3" fill="none" stroke="#3a7d5a" stroke-width="1"/><path d="M12.4 6v3" stroke="#3a7d5a" stroke-width="1"/><circle cx="12.4" cy="9.3" r="1.1" fill="#2d5f44"/><path d="M15.6 8.3c3 .2 5.6 2.4 5.9 5.6l-.6 6-1.6-5.4-2.2-2.6z" fill="#2e6e4a"/><path d="M14.2 5.5c1.5 0 2.5.8 3 1.8" fill="none" stroke="#3a7d5a" stroke-width="1"/></svg>
<svg class="a" style="left:840px;top:213px" width="19" height="20" viewBox="0 0 19 20"><path d="M9.5 1.5l7.5 5.5-3 9h-9l-3-9z" fill="#fff" stroke="#6a6a6a" stroke-width="1"/><path d="M5 16l-1.5 3M14 16l1.5 3" stroke="#bbb" stroke-width="1"/></svg>
<svg class="a" style="left:874px;top:213px" width="19" height="19" viewBox="0 0 19 19"><rect x="1" y="7" width="4.5" height="11" fill="#707070"/><rect x="7" y="2" width="4.5" height="16" fill="#707070"/><rect x="13" y="5" width="4.5" height="13" fill="#707070"/></svg>
<div class="a" style="left:800px;top:248px;width:211px;height:1px;background:#dcdcdc"></div>
<svg class="a" style="left:810px;top:244px" width="11" height="6" viewBox="0 0 11 6"><path d="M0 5.5L5.5 .5 11 5.5" fill="#f0f0f0" stroke="#dcdcdc" stroke-width="1"/></svg>
<svg class="a" style="left:801px;top:258px" width="13" height="9" viewBox="0 0 13 9"><path d="M2 7.5L5.5 3l3 4.5L12 2" fill="none" stroke="#555" stroke-width="1.1" stroke-linejoin="round"/></svg>
<div class="f t" style="left:818px;top:256px;width:10px;font-size:11px;color:#262626;font-weight:bold">線</div>
<svg class="a" style="left:843px;top:256px" width="16" height="10" viewBox="0 0 16 10"><path d="M2 8l4-5 4 3 4-5" fill="none" stroke="#333" stroke-width="1.2"/><circle cx="2" cy="8" r="1.4" fill="#333"/><circle cx="6" cy="3" r="1.4" fill="#333"/><circle cx="10" cy="6" r="1.4" fill="#333"/><circle cx="14" cy="1.5" r="1.4" fill="#333"/></svg>
<div class="f t" style="left:860px;top:256px;width:31px;font-size:11px;color:#262626">マーカー</div>
<svg class="a" style="left:805px;top:281px" width="9" height="6" viewBox="0 0 9 6"><path d="M1 1l3.5 3.5L8 1" fill="none" stroke="#333" stroke-width="1.3"/></svg>
<div class="f t" style="left:818px;top:279px;width:10px;font-size:11px;color:#262626;font-weight:bold">線</div>

<svg class="a" style="left:817px;top:304px" width="11" height="70" viewBox="0 0 11 70">
 <circle cx="5.5" cy="5" r="4.3" fill="#fff" stroke="#9a9a9a" stroke-width="1"/>
 <circle cx="5.5" cy="24" r="3.8" fill="#fff" stroke="#1e6e3c" stroke-width="2.6"/>
 <circle cx="5.5" cy="44.3" r="4.3" fill="#fff" stroke="#9a9a9a" stroke-width="1"/>
 <circle cx="5.5" cy="64" r="4.3" fill="#fff" stroke="#9a9a9a" stroke-width="1"/>
</svg>
<div class="f pl" style="left:833px;top:303px;width:40px">線なし(<u>N</u>)</div>
<div class="f pl" style="left:833px;top:322px;width:56px">線 (単色)(<u>S</u>)</div>
<div class="f pl" style="left:833px;top:342.3px;width:87px">線 (グラデーション)(<u>G</u>)</div>
<div class="f pl" style="left:833px;top:362px;width:35px">自動(<u>U</u>)</div>
<div class="a" style="left:817px;top:379.5px;width:178px;height:1px;background:#dcdcdc"></div>

<div class="f pl" style="left:826px;top:393px;width:26px">色(<u>C</u>)</div>
<div class="btn" style="left:957.7px;top:386px;width:36.7px;height:23px"></div>
<svg class="a" style="left:963px;top:389px" width="28" height="17" viewBox="0 0 28 17"><path d="M13 2H1.5v9h6" fill="none" stroke="#444" stroke-width="1"/><path d="M7 10.5l7-8 2 2-7 7.5H6.5z" fill="none" stroke="#2f7bbf" stroke-width="1.1"/><rect x="0.5" y="13" width="16" height="3.3" fill="#e0833c"/><path d="M21.5 7.5l2.5 2.5 2.5-2.5" fill="none" stroke="#333" stroke-width="1.1"/></svg>

<div class="f pl" style="left:826px;top:418px;width:45px">透明度(<u>T</u>)</div>
<div class="a" style="left:881px;top:419.5px;width:1.3px;height:9px;background:#555"></div>
<div class="a" style="left:882px;top:423.8px;width:34px;height:1px;background:#9a9a9a"></div>
<div class="btn" style="left:923.5px;top:415px;width:71px;height:18px;border-radius:3px"></div>
<div class="t" style="left:930px;top:418px;font-size:11.5px;color:#262626">0%</div>
<svg class="a" style="left:984px;top:416px" width="7" height="16" viewBox="0 0 7 16"><path d="M1 5l2.5-2.5L6 5M1 11l2.5 2.5L6 11" fill="none" stroke="#777" stroke-width="1"/></svg>

<div class="a" style="left:819px;top:435.4px;width:184px;height:23.5px;border:1.6px solid #d0272d;border-radius:3px"></div>
<div class="f pl" style="left:826px;top:443px;width:30px">幅(<u>W</u>)</div>
<div class="btn" style="left:923.5px;top:438.6px;width:71px;height:18.4px;border-radius:3px"></div>
<div class="t" style="left:929px;top:442px;font-size:11.5px;color:#262626">3 pt</div>
<svg class="a" style="left:984px;top:440px" width="7" height="16" viewBox="0 0 7 16"><path d="M1 5l2.5-2.5L6 5M1 11l2.5 2.5L6 11" fill="none" stroke="#777" stroke-width="1"/></svg>

<div class="f pl" style="left:826px;top:469px;width:78px">一重線/多重線(<u>C</u>)</div>
<div class="btn" style="left:957.7px;top:463px;width:36.7px;height:22px"></div>
<svg class="a" style="left:963px;top:466px" width="28" height="16" viewBox="0 0 28 16"><rect x="1" y="2" width="16" height="2.2" fill="#2e75b6"/><rect x="1" y="6.8" width="16" height="2.2" fill="#2e75b6"/><rect x="1" y="11.3" width="16" height="3" fill="#2e75b6"/><path d="M21.5 7l2.5 2.5 2.5-2.5" fill="none" stroke="#333" stroke-width="1.1"/></svg>

<div class="f pl" style="left:826px;top:498.7px;width:59px">実線/点線(<u>D</u>)</div>
<div class="btn" style="left:957.7px;top:491px;width:36.7px;height:23px"></div>
<svg class="a" style="left:963px;top:494px" width="28" height="16" viewBox="0 0 28 16"><path d="M1 3.5h16" stroke="#555" stroke-width="1"/><path d="M1 7.5h16" stroke="#555" stroke-width="1" stroke-dasharray="2 1"/><path d="M1 11.5h16" stroke="#555" stroke-width="1" stroke-dasharray="1 1"/><path d="M21.5 7l2.5 2.5 2.5-2.5" fill="none" stroke="#333" stroke-width="1.1"/></svg>

<div class="f pl" style="left:826px;top:523.7px;width:53px">線の先端(<u>A</u>)</div>
<div class="btn" style="left:945.5px;top:521px;width:49px;height:16px;border-radius:3px"></div>
<div class="t" style="left:950px;top:523px;font-size:11px;color:#262626">丸</div>
<svg class="a" style="left:984px;top:527px" width="7" height="5" viewBox="0 0 7 5"><path d="M1 1l2.5 2.5L6 1" fill="none" stroke="#333" stroke-width="1.1"/></svg>
<div class="f pl" style="left:826px;top:545.6px;width:59px">線の結合点(<u>J</u>)</div>
<div class="btn" style="left:945.5px;top:542.8px;width:49px;height:16.4px;border-radius:3px"></div>
<div class="t" style="left:950px;top:545px;font-size:11px;color:#262626">丸</div>
<svg class="a" style="left:984px;top:549px" width="7" height="5" viewBox="0 0 7 5"><path d="M1 1l2.5 2.5L6 1" fill="none" stroke="#333" stroke-width="1.1"/></svg>

<div class="f pl" style="left:826px;top:571.3px;width:82px">始点矢印の種類(<u>B</u>)</div>
<div class="btn" style="left:957.3px;top:565.4px;width:37px;height:22.8px"></div>
<svg class="a" style="left:963px;top:569px" width="28" height="15" viewBox="0 0 28 15"><path d="M3 4h13M13.5 1.5L16 4l-2.5 2.5M2 11h13M4.5 8.5L2 11l2.5 2.5" fill="none" stroke="#2e75b6" stroke-width="1.1"/><path d="M21.5 6l2.5 2.5 2.5-2.5" fill="none" stroke="#333" stroke-width="1.1"/></svg>
<div class="f pl" style="left:826px;top:600.3px;width:87px">始点矢印のサイズ(<u>S</u>)</div>
<div class="btn" style="left:957.3px;top:593.8px;width:37px;height:23.5px"></div>
<svg class="a" style="left:963px;top:597px" width="28" height="17" viewBox="0 0 28 17"><rect x="1" y="1.5" width="16" height="1.8" fill="#2e75b6"/><rect x="1" y="5.5" width="16" height="2" fill="#2e75b6"/><rect x="1" y="9.5" width="16" height="2.2" fill="#2e75b6"/><rect x="1" y="13.5" width="16" height="2.8" fill="#2e75b6"/><path d="M21.5 7l2.5 2.5 2.5-2.5" fill="none" stroke="#333" stroke-width="1.1"/></svg>
<div class="f pl" style="left:826px;top:629px;width:82px">終点矢印の種類(<u>E</u>)</div>
<div class="btn" style="left:957.3px;top:623.2px;width:37px;height:22.8px"></div>
<svg class="a" style="left:963px;top:627px" width="28" height="15" viewBox="0 0 28 15"><path d="M3 4h13M13.5 1.5L16 4l-2.5 2.5M2 11h13M4.5 8.5L2 11l2.5 2.5" fill="none" stroke="#2e75b6" stroke-width="1.1"/><path d="M21.5 6l2.5 2.5 2.5-2.5" fill="none" stroke="#333" stroke-width="1.1"/></svg>
<div class="f pl" style="left:826px;top:658px;width:88px">終点矢印のサイズ(<u>N</u>)</div>
<div class="btn" style="left:957.3px;top:651.7px;width:37px;height:23.1px"></div>
<svg class="a" style="left:963px;top:655px" width="28" height="17" viewBox="0 0 28 17"><rect x="1" y="1.5" width="16" height="1.8" fill="#2e75b6"/><rect x="1" y="5.5" width="16" height="2" fill="#2e75b6"/><rect x="1" y="9.5" width="16" height="2.2" fill="#2e75b6"/><rect x="1" y="13.5" width="16" height="2.8" fill="#2e75b6"/><path d="M21.5 7l2.5 2.5 2.5-2.5" fill="none" stroke="#333" stroke-width="1.1"/></svg>
<div class="a" style="left:826px;top:682.5px;width:10.5px;height:10.5px;background:#fff;border:1px solid #777"></div>
<div class="f pl" style="left:841px;top:682px;width:63px">スムージング(<u>M</u>)</div>
<script>
document.querySelectorAll('.f').forEach(function(e){
  var w=parseFloat(e.style.width);e.style.width='auto';
  var n=e.getBoundingClientRect().width;
  if(n>0&&w>0){e.style.transformOrigin='0 50%';e.style.transform='scaleX('+(w/n)+')';}
});
</script>
</body></html>
